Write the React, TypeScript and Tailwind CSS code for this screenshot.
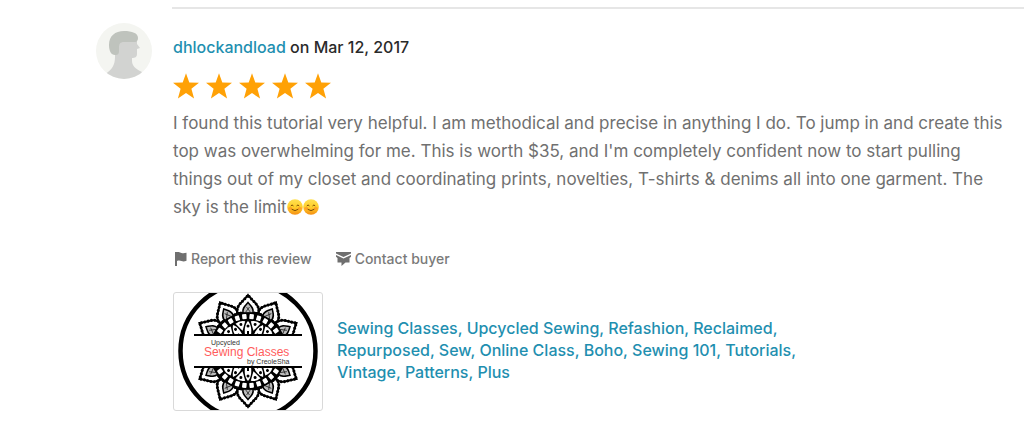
const PETALS = [30, 90, 150, 210, 270, 330, 0, 60, 120, 180, 240, 300];
const BEADS = Array.from({ length: 30 }, (_, i) => i * 12);

function Avatar() {
  return (
    <svg viewBox="0 0 56 56" className="size-14" role="img" aria-label="dhlockandload">
      <defs>
        <clipPath id="avatar-clip">
          <circle cx="28" cy="28" r="28" />
        </clipPath>
      </defs>
      <g clipPath="url(#avatar-clip)">
        <rect width="56" height="56" fill="#f4f5f1" />
        <path
          d="M9 51C16 47 19 42 19 34V16h22v5l3 4-3 1v5c0 3-2 4-5 4v3c0 4 3 8 10 11L42 60H12Z"
          fill="#d2d3d1"
        />
        <path
          d="M19 32c-4 0-6-4-6-10C13 13 19 8 28 8c8 0 14 2 14 7 0 2-1 4-3 4H28c-4 0-5 2-5 6v3c0 3-1 4-4 4Z"
          fill="#bfc3bd"
        />
      </g>
    </svg>
  );
}

function Star() {
  return (
    <svg viewBox="0 0 26 26" className="size-[26px]" fill="#ffa106" aria-hidden="true">
      <path d="M13 .3l3.300 9.100 9.700.3-7.600 6.100 2.700 9.700L13 20.100l-8.100 5.400 2.700-9.700L0 9.700l9.700-.3Z" />
    </svg>
  );
}

function Smile() {
  return (
    <svg viewBox="0 0 16 16" className="inline-block size-4 align-[-2px]" role="img" aria-label="smiling face">
      <defs>
        <linearGradient id="smile-fill" x2="0" y2="1">
          <stop offset="0" stopColor="#ffe052" />
          <stop offset=".5" stopColor="#ffd02b" />
          <stop offset="1" stopColor="#f58e12" />
        </linearGradient>
      </defs>
      <circle cx="8" cy="8" r="7.800" fill="url(#smile-fill)" />
      <ellipse cx="3.200" cy="9.300" rx="1.900" ry="1.400" fill="#ff8a2a" opacity=".6" />
      <ellipse cx="12.800" cy="9.300" rx="1.900" ry="1.400" fill="#ff8a2a" opacity=".6" />
      <path
        d="M4 6.600Q5 5 6.200 6.600M9.800 6.600Q11 5 12 6.600M5 10.500Q8 13 11 10.500"
        fill="none"
        stroke="#7a4a05"
        strokeLinecap="round"
      />
    </svg>
  );
}

function FlagIcon() {
  return (
    <svg viewBox="0 0 12 15" className="h-[15px] w-3" fill="#6f6f6f" aria-hidden="true">
      <path d="M0 0h2C4-.4 5 .6 6.500 1 8 1.500 9.500 1.300 11.500 .8v8C9.500 9.500 8 9.600 6.500 9 5 8.500 4 8.300 2 8.900V14H0Z" />
    </svg>
  );
}

function ContactIcon() {
  return (
    <svg viewBox="0 0 15 15" className="size-[15px]" fill="#6f6f6f" aria-hidden="true">
      <path d="M0 0h15v1.500L7.500 5 0 1.500Z" />
      <path d="M0 3 7.500 6.600 15 3V4.800L13.500 6v4.500H9.500L5.500 14v-3.500H1.500V6L0 4.800Z" />
    </svg>
  );
}

function Petal({ angle }: { angle: number }) {
  const outline = "M-10.500 -38C-12.500 -46 -5 -49 0 -56C5 -49 12.500 -46 10.500 -38Z";
  return (
    <g transform={`rotate(${angle})`}>
      <path d={outline} fill="#fff" stroke="#000" strokeWidth="2" />
      <path d={outline} fill="none" stroke="#000" strokeWidth="3" strokeLinecap="round" strokeDasharray="0 3.400" />
      <path d="M-5 -38C-6 -43 -3 -45 0 -48.500C3 -45 6 -43 5 -38Z" fill="#bbb" stroke="#000" strokeWidth="1.500" />
      <path d="M-3 -38 1.500 -44M3 -38 -1.500 -44" stroke="#222" strokeWidth=".8" />
    </g>
  );
}

function ListingPicture() {
  return (
    <svg viewBox="-74 -58 148 117" className="block w-full" role="img" aria-label="Upcycled Sewing Classes by CreoleSha">
      <circle r="67.500" fill="#fff" stroke="#000" strokeWidth="4.500" />
      {PETALS.map((angle) => (
        <Petal key={angle} angle={angle} />
      ))}
      <circle r="38.500" fill="#000" />
      {BEADS.map((angle) => (
        <rect key={angle} x="-2.200" y="-37" width="4.400" height="5" rx=".8" fill="#fff" transform={`rotate(${angle + 6})`} />
      ))}
      {PETALS.map((angle) => (
        <g key={angle} transform={`rotate(${angle})`}>
          <path d="M0 -30C3.500 -26 4 -20 2.500 -14H-2.500C-4 -20 -3.500 -26 0 -30Z" fill="#fff" />
          <circle cy="-25" r="1.500" fill="#000" />
          <path d="M-1 -20h2v4h-2Z" fill="#000" />
          <g transform="rotate(15)">
            <path d="M-5 -29.500Q0 -32 5 -29.500L0 -21Z" fill="#fff" />
            <circle cy="-27.500" r="1.500" fill="#000" />
          </g>
        </g>
      ))}
      <rect x="-62" y="-16" width="124" height="32" fill="#fff" />
      <path d="M-54 -16H54M-54 16H54" stroke="#000" strokeWidth="2" />
      <g fontFamily="'Liberation Sans', Arial, sans-serif">
        <text x="-37" y="-6" fontSize="7" fill="#333">Upcycled</text>
        <text x="-44" y="5" fontSize="12" fill="#ff5c5c">Sewing Classes</text>
        <text x="-1" y="13" fontSize="7" fill="#333">by CreoleSha</text>
      </g>
    </svg>
  );
}

export default function App() {
  return (
    <main className="min-h-screen bg-white pt-[7px] pl-24 font-['Inter','Liberation_Sans',sans-serif] text-base text-[#707070]">
      <article className="flex gap-5">
        <div className="shrink-0 pt-4">
          <Avatar />
        </div>
        <div className="min-w-0 flex-1 border-t-2 border-[#e6e6e6] pl-px">
          <header className="pt-[26px] font-medium leading-6 text-[#2a2a2a]">
            <a href="#buyer" className="text-[#1f8fb0]">dhlockandload</a> on Mar 12, 2017
          </header>
          <div className="mt-[14px] flex gap-[7px]" role="img" aria-label="5 out of 5 stars">
            <Star />
            <Star />
            <Star />
            <Star />
            <Star />
          </div>
          <p className="mt-[10px] pr-4 text-[17px] leading-7">
            I found this tutorial very helpful. I am methodical and precise in anything I do. To jump in and create this
            <br />
            top was overwhelming for me. This is worth $35, and I'm completely confident now to start pulling
            <br />
            things out of my closet and coordinating prints, novelties, T-shirts &amp; denims all into one garment. The
            <br />
            sky is the limit
            <Smile />
            <Smile />
          </p>
          <div className="mt-7 flex gap-6 text-sm font-medium leading-5 text-[#7a7a7a]">
            <button type="button" className="flex items-center gap-1 pl-[2px]">
              <FlagIcon />
              Report this review
            </button>
            <button type="button" className="flex items-center gap-1">
              <ContactIcon />
              Contact buyer
            </button>
          </div>
          <div className="mt-[23px] flex items-center gap-[14px]">
            <a href="#listing" className="w-[150px] shrink-0 overflow-hidden rounded-[3px] border border-[#d9d9d9]">
              <ListingPicture />
            </a>
            <a href="#listing" className="max-w-[480px] pb-1 font-medium leading-[22px] text-[#1f8fb0]">
              Sewing Classes, Upcycled Sewing, Refashion, Reclaimed, Repurposed, Sew, Online Class, Boho, Sewing 101,
              Tutorials, Vintage, Patterns, Plus
            </a>
          </div>
        </div>
      </article>
    </main>
  );
}
